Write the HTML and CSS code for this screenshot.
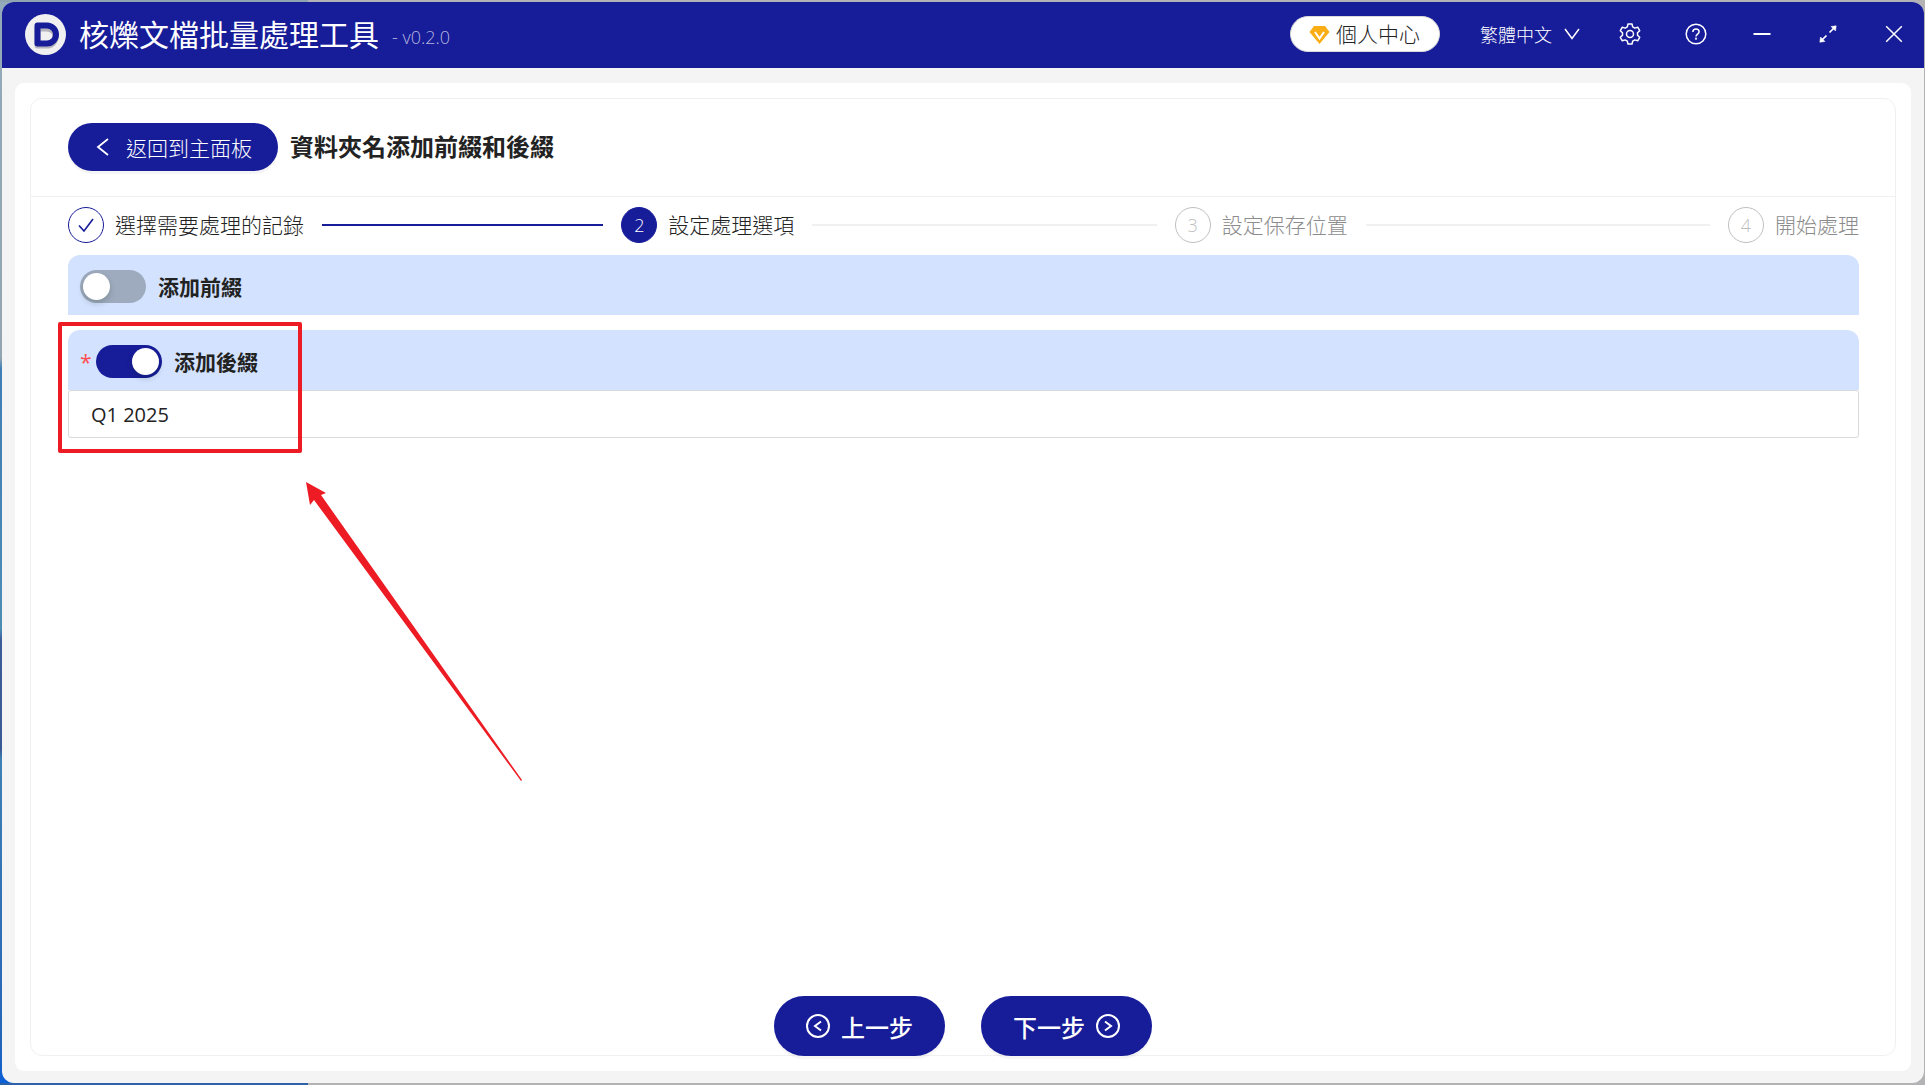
FILE: index.html
```html
<!DOCTYPE html>
<html lang="zh-Hant">
<head>
    <meta charset="UTF-8">
    <meta name="viewport" content="width=device-width, initial-scale=1.0">
    <title>核爍文檔批量處理工具</title>
    <link rel="stylesheet" href="styles.css">
</head>
<body>
    <div class="window">
        <header class="titlebar">
            <svg class="logo" viewBox="0 0 41 41" aria-hidden="true">
                <circle cx="20.5" cy="20.5" r="20.5" fill="#f0f0f0"/>
                <path d="M12.500 12.500H22a8.500 8.500 0 0 1 0 17H12.500z" transform="translate(0 2)" fill="none" stroke="#b4b4bc" stroke-width="6" stroke-linejoin="round"/>
                <path d="M12.500 11.500H22a9 9 0 0 1 0 18H12.500z" fill="none" stroke="#171c99" stroke-width="6" stroke-linejoin="round"/>
            </svg>
            <h1 class="app-name">核爍文檔批量處理工具</h1>
            <span class="version">- v0.2.0</span>

            <button class="account" type="button">
                <svg width="21" height="21" viewBox="0 0 21 21" aria-hidden="true">
                    <path d="M5 2h11l4.500 6L10.500 20 .5 8z" fill="#faad14"/>
                    <path d="M6 8l4.500 6.500L15 8" fill="none" stroke="#fff" stroke-width="2"/>
                </svg>
                個人中心
            </button>

            <label class="language">
                <select class="language-select" aria-label="語言">
                    <option>繁體中文</option>
                </select>
                <svg width="16" height="16" viewBox="0 0 16 16" aria-hidden="true">
                    <path d="M1 3l7 9.500L15 3" fill="none" stroke="#fff" stroke-width="1.500"/>
                </svg>
            </label>

            <nav class="window-tools">
                <button class="tool" type="button" aria-label="設定">
                    <svg width="22" height="22" viewBox="0 0 22 22" fill="none" stroke="#fff" stroke-width="1.500" stroke-linejoin="round">
                        <path d="M9 1h4l.7 2.900 2.100 1.200 2.900-.9 2 3.500L18.500 9.800v2.400l2.200 2.100-2 3.500-2.900-.9-2.100 1.200L13 21H9l-.7-2.900-2.100-1.200-2.900.9-2-3.500 2.200-2.100V9.800L1.300 7.700l2-3.500 2.900.9 2.100-1.200z"/>
                        <circle cx="11" cy="11" r="3.500"/>
                    </svg>
                </button>
                <button class="tool" type="button" aria-label="說明">
                    <svg width="22" height="22" viewBox="0 0 22 22" fill="none" stroke="#fff" stroke-width="1.500">
                        <circle cx="11" cy="11" r="9.800"/>
                        <path d="M7.900 8.900c0-1.800 1.300-3 3.100-3s3.100 1.200 3.100 2.900c0 2.300-3.100 2.300-3.100 4.700"/>
                        <circle cx="11" cy="15.700" r=".4"/>
                    </svg>
                </button>
                <button class="tool" type="button" aria-label="最小化">
                    <svg width="22" height="22" viewBox="0 0 22 22" fill="none" stroke="#fff" stroke-width="2">
                        <path d="M2.500 11h17"/>
                    </svg>
                </button>
                <button class="tool" type="button" aria-label="最大化">
                    <svg width="22" height="22" viewBox="0 0 22 22" fill="#fff" stroke="#fff" stroke-width="1.700">
                        <path d="M12.500 9.500L18 4M9.500 12.500L4 18" fill="none"/>
                        <path d="M19.200 2.800l-5.200.7 4.500 4.500zM2.800 19.200l.7-5.200L8 18.500z" stroke-width=".5"/>
                    </svg>
                </button>
                <button class="tool" type="button" aria-label="關閉">
                    <svg width="22" height="22" viewBox="0 0 22 22" fill="none" stroke="#fff" stroke-width="1.500">
                        <path d="M3.200 3.200l15.600 15.600M18.800 3.200L3.200 18.800"/>
                    </svg>
                </button>
            </nav>
        </header>

        <div class="page">
            <main class="card">
                <div class="card-head">
                    <button class="back" type="button">
                        <svg width="14" height="20" viewBox="0 0 14 20" aria-hidden="true">
                            <path d="M12 2L2 10l10 8" fill="none" stroke="#fff" stroke-width="1.800"/>
                        </svg>
                        返回到主面板
                    </button>
                    <h2 class="card-title">資料夾名添加前綴和後綴</h2>
                </div>

                <div class="card-body">
                    <ol class="steps">
                        <li class="step done">
                            <span class="step-icon">
                                <svg width="20" height="18" viewBox="0 0 20 18" aria-label="完成">
                                    <path d="M3 9.500l5 5.500L17 3" fill="none" stroke="#171c99" stroke-width="1.600"/>
                                </svg>
                            </span>
                            <span class="step-title">選擇需要處理的記錄</span>
                        </li>
                        <li class="step current">
                            <span class="step-icon">2</span>
                            <span class="step-title">設定處理選項</span>
                        </li>
                        <li class="step">
                            <span class="step-icon">3</span>
                            <span class="step-title">設定保存位置</span>
                        </li>
                        <li class="step">
                            <span class="step-icon">4</span>
                            <span class="step-title">開始處理</span>
                        </li>
                    </ol>

                    <section class="option">
                        <div class="option-head">
                            <input class="switch" type="checkbox" id="prefixSwitch">
                            <label class="option-label" for="prefixSwitch">添加前綴</label>
                        </div>
                    </section>

                    <section class="option">
                        <div class="option-head">
                            <span class="required">*</span>
                            <input class="switch" type="checkbox" id="suffixSwitch" checked>
                            <label class="option-label" for="suffixSwitch">添加後綴</label>
                        </div>
                        <input class="option-input" type="text" value="Q1 2025" aria-label="後綴">

                        <!-- red marker and arrow over the suffix option -->
                        <div class="marker"></div>
                        <svg class="arrow" width="218" height="300" viewBox="0 0 218 300" aria-hidden="true">
                            <path d="M0 0l20 11-5 2L216 298l-1 1L8 18l-4 5z" fill="#ed1c24"/>
                        </svg>
                    </section>
                </div>

                <footer class="actions">
                    <button class="action" type="button">
                        <svg width="24" height="24" viewBox="0 0 24 24" fill="none" stroke="#fff" stroke-width="2" aria-hidden="true">
                            <circle cx="12" cy="12" r="11"/>
                            <path d="M15 7.500L9 12l6 4.500"/>
                        </svg>
                        上一步
                    </button>
                    <button class="action" type="button">
                        下一步
                        <svg width="24" height="24" viewBox="0 0 24 24" fill="none" stroke="#fff" stroke-width="2" aria-hidden="true">
                            <circle cx="12" cy="12" r="11"/>
                            <path d="M9 7.500l6 4.500-6 4.500"/>
                        </svg>
                    </button>
                </footer>
            </main>
        </div>
    </div>
</body>
</html>
```

FILE: styles.css
```css
* {
    box-sizing: border-box;
}

body {
    margin: 0;
    height: 100vh;
    padding: 2px 1px 2px 2px;
    background:
        linear-gradient(#2d62a8, #2d62a8) left bottom / 16% 2px no-repeat,
        linear-gradient(#8fa3b1, #8fa3b1) left top / 16% 2px no-repeat,
        linear-gradient(#93aaba 0%, #93a5b1 33%, #3f7fb5 34%, #4d8db5 58%, #3c5c9a 59%, #3a5a96 69%, #3f80b4 70%, #2565b8 96%, #0a5fd8 100%) left top / 12px 100% no-repeat,
        #b3b2b4;
    color: #222;
    font-family: "Open Sans", "Noto Sans CJK TC", sans-serif;
    font-size: 21px;
    font-weight: 300;
}

button,
input,
select {
    font: inherit;
}

button {
    border: none;
    cursor: pointer;
}

svg {
    flex: none;
}

.window {
    display: flex;
    flex-direction: column;
    height: 100%;
    border-radius: 12px;
    overflow: hidden;
    background: #f4f4f4;
}

/* title bar */
.titlebar {
    display: flex;
    align-items: center;
    height: 66px;
    padding: 0 0 2px 23px;
    background: #171c99;
    color: #fff;
}

.logo {
    width: 41px;
    height: 41px;
}

.app-name {
    margin: 0 0 0 13px;
    padding-top: 2px;
    font-size: 30px;
    font-weight: 400;
    line-height: 40px;
}

.version {
    margin-left: 13px;
    padding-top: 5px;
    font-size: 18px;
    line-height: 24px;
    color: #b4b6de;
}

.account {
    display: flex;
    align-items: center;
    gap: 6px;
    height: 36px;
    margin-left: auto;
    padding: 0 19px 0 18px;
    border: 1px solid #d9d9d9;
    border-radius: 18px;
    background: #fff;
    color: #222;
    line-height: 32px;
}

.language {
    display: flex;
    align-items: center;
    gap: 12px;
    margin: 0 20px 0 40px;
}

.language-select {
    appearance: none;
    padding: 2px 0 0;
    border: none;
    background: none;
    color: #fff;
    font-size: 18px;
    line-height: 24px;
}

.language-select option {
    color: #222;
}

.window-tools {
    display: flex;
    gap: 6px;
}

.tool {
    display: flex;
    align-items: center;
    justify-content: center;
    width: 60px;
    height: 44px;
    padding: 0;
    background: none;
}

/* page */
.page {
    display: flex;
    flex: 1;
    margin: 15px 13px 12px 13px;
    padding: 15px;
    border-radius: 9px;
    background: #fff;
}

.card {
    display: flex;
    flex: 1;
    flex-direction: column;
    border: 1px solid #f0f0f0;
    border-radius: 12px;
}

.card-head {
    display: flex;
    align-items: center;
    gap: 12px;
    padding: 24px 37px 25px;
    border-bottom: 1px solid #f0f0f0;
}

.back {
    display: flex;
    align-items: center;
    gap: 16px;
    height: 48px;
    padding: 0 26px 0 28px;
    border-radius: 24px;
    background: #171c99;
    box-shadow: 0 3px 0 rgba(0, 0, 0, 0.04);
    color: #fff;
}

.card-title {
    margin: 0;
    font-size: 24px;
    font-weight: 700;
    line-height: 36px;
}

.card-body {
    flex: 1;
    padding: 10px 36px 0 37px;
}

/* steps */
.steps {
    display: flex;
    gap: 18px;
    margin: 0 0 12px;
    padding: 0;
    list-style: none;
}

.step {
    display: flex;
    flex: 1;
    align-items: center;
    color: #8c8c8c;
}

.step:last-child {
    flex: none;
}

.step-icon {
    display: flex;
    align-items: center;
    justify-content: center;
    width: 36px;
    height: 36px;
    margin-right: 11px;
    border: 1px solid #bfbfbf;
    border-radius: 50%;
    font-size: 18px;
    line-height: 24px;
    color: #bfbfbf;
}

.step-title {
    padding-top: 1px;
    line-height: 35px;
}

.step:not(:last-child)::after {
    content: "";
    flex: 1;
    height: 2px;
    margin-left: 18px;
    background: #f0f0f0;
}

.done,
.current {
    color: #222;
}

.done .step-icon {
    border-color: #171c99;
}

.done::after {
    background: #171c99 !important;
}

.current .step-icon {
    border-color: #171c99;
    background: #171c99;
    color: #fff;
}

/* options */
.option {
    position: relative;
    margin-bottom: 15px;
}

.option-head {
    display: flex;
    align-items: center;
    height: 60px;
    padding: 3px 12px 0;
    border-radius: 12px 12px 0 0;
    background: #d3e2fe;
}

.required {
    width: 16px;
    font-weight: 400;
    line-height: 24px;
    color: #ff4d4f;
}

.switch {
    appearance: none;
    width: 66px;
    height: 33px;
    margin: 0;
    padding: 3px;
    border-radius: 17px;
    background: #9eaabe;
    cursor: pointer;
}

.switch::before {
    content: "";
    display: block;
    width: 27px;
    height: 27px;
    border-radius: 50%;
    background: #fff;
    box-shadow: 0 3px 6px rgba(0, 35, 11, 0.2);
}

.switch:checked {
    background: #171c99;
}

.switch:checked::before {
    margin-left: auto;
}

.option-label {
    margin-left: 12px;
    font-weight: 700;
    line-height: 32px;
}

.option-input {
    display: block;
    width: 100%;
    height: 48px;
    padding: 0 22px;
    border: 1px solid #d9d9d9;
    border-radius: 3px;
    outline: none;
    color: #222;
    font-size: 20px;
    font-weight: 400;
}

.marker {
    position: absolute;
    top: -8px;
    left: -10px;
    width: 244px;
    height: 131px;
    border: 4px solid #ed1c24;
    border-radius: 2px;
    pointer-events: none;
}

.arrow {
    position: absolute;
    top: 152px;
    left: 238px;
    pointer-events: none;
}

/* bottom buttons */
.actions {
    display: flex;
    justify-content: center;
    gap: 36px;
}

.action {
    display: flex;
    align-items: center;
    gap: 11px;
    height: 60px;
    margin-bottom: -1px;
    padding: 0 32px;
    border-radius: 30px;
    background: #171c99;
    box-shadow: 0 3px 0 rgba(0, 0, 0, 0.04);
    color: #fff;
    font-size: 24px;
    font-weight: 500;
}
```
